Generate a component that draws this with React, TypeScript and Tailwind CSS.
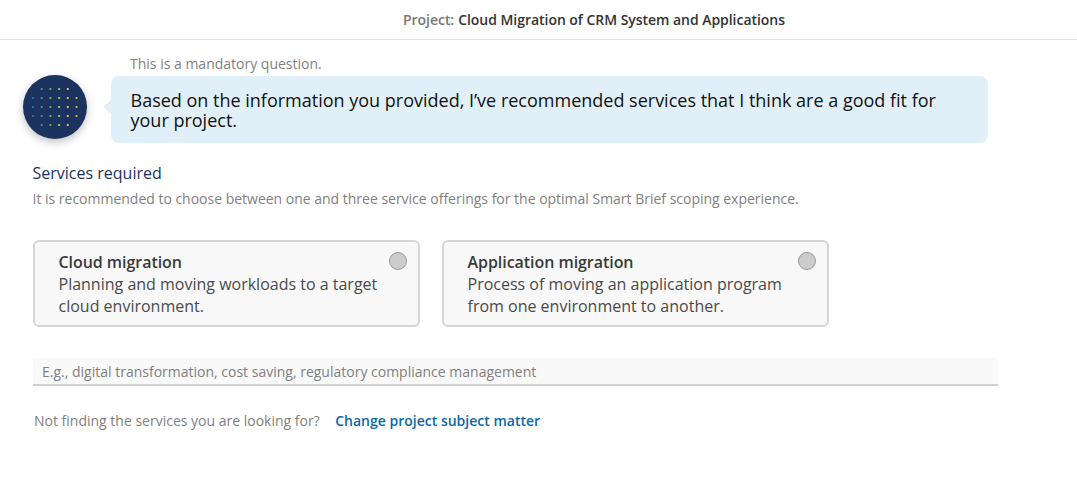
const dotRows = [
  { y: 14, cols: [1, 2, 3, 4] },
  { y: 23, cols: [0, 1, 2, 3, 4, 5] },
  { y: 32, cols: [0, 1, 2, 3, 4, 5] },
  { y: 41, cols: [0, 1, 2, 3, 4, 5] },
  { y: 50, cols: [1, 2, 3, 4] },
];
const dotColors = ["#2f7fb8", "#4f9a94", "#7fb86a", "#c4cf5a", "#e6d65a", "#eeb648"];

function Avatar() {
  return (
    <div className="w-16 h-16 rounded-full bg-[#1c335f] shadow-[0_3px_8px_rgba(0,0,0,0.25)] shrink-0">
      <svg width="64" height="64" viewBox="0 0 64 64">
        {dotRows.map((row) =>
          row.cols.map((c) => (
            <circle key={`${row.y}-${c}`} cx={10 + c * 8.7} cy={row.y} r="1.1" fill={dotColors[c]} />
          ))
        )}
      </svg>
    </div>
  );
}

function ServiceCard({ title, text }: { title: string; text: string }) {
  return (
    <div className="relative w-[387px] h-[87px] bg-[#f8f8f8] border-2 border-[#d6d6d6] rounded-[6px] pl-[23.5px] pt-[9px] pr-[30px]">
      <div className="text-[16px] leading-[22px] font-semibold tracking-[-0.05px] text-[#3a3a3a]">{title}</div>
      <div className="text-[16px] leading-[22px] text-[#4a4a4a]">{text}</div>
      <div className="absolute top-[10px] right-[11px] w-[18px] h-[18px] rounded-full bg-[#cccccc] border border-[#9a9a9a]" />
    </div>
  );
}

export default function App() {
  return (
    <div className="w-[1077px] h-[495px] bg-white font-['Open_Sans',sans-serif] overflow-hidden">
      <header className="h-[40px] border-b border-[#e5e5e5] pl-[111px] flex items-center justify-center text-[14px] font-semibold tracking-[-0.04px]">
        <span className="text-[#777777] mr-[4px]">Project:</span>
        <span className="text-[#333333]">Cloud Migration of CRM System and Applications</span>
      </header>

      <div className="pl-[22.5px] pt-[14px]">
        <div className="pl-[107.5px] text-[14px] leading-[19px] text-[#7f7f7f]">This is a mandatory question.</div>
        <div className="flex items-start mt-[2px]">
          <Avatar />
          <div className="relative mt-[1px] ml-[24.5px] w-[877px] h-[67px] bg-[#e1f0f8] rounded-[8px] pl-[19.5px] pr-[40px] pt-[14px] text-[18px] leading-[20px] text-[#111111]">
            <div className="absolute left-[-8px] top-[24px] w-0 h-0 border-y-[7px] border-y-transparent border-r-[8px] border-r-[#e1f0f8]" />
            Based on the information you provided, I’ve recommended services that I think are a good fit for your project.
          </div>
        </div>
      </div>

      <div className="pl-[32.5px] pt-[19px]">
        <div className="text-[16px] leading-[22px] text-[#1c335f]">Services required</div>
        <div className="mt-[5px] text-[14px] leading-[19px] tracking-[-0.01px] text-[#7f7f7f]">
          It is recommended to choose between one and three service offerings for the optimal Smart Brief scoping experience.
        </div>

        <div className="flex gap-[22px] mt-[32px] pl-[0.5px]">
          <ServiceCard title="Cloud migration" text="Planning and moving workloads to a target cloud environment." />
          <ServiceCard title="Application migration" text="Process of moving an application program from one environment to another." />
        </div>

        <div className="mt-[31px] ml-[0.5px] w-[965px] h-[28px] bg-[#f9f9f9] border-b-2 border-[#d0d0d0] pl-[9px] text-[14px] leading-[27px] text-[#7f7f7f]">
          E.g., digital transformation, cost saving, regulatory compliance management
        </div>

        <div className="flex mt-[25px] pl-[1.5px] text-[14px] leading-[19px]">
          <span className="text-[#7f7f7f]">Not finding the services you are looking for?</span>
          <a className="ml-[15.5px] font-semibold text-[#0b69a8]">Change project subject matter</a>
        </div>
      </div>
    </div>
  );
}
